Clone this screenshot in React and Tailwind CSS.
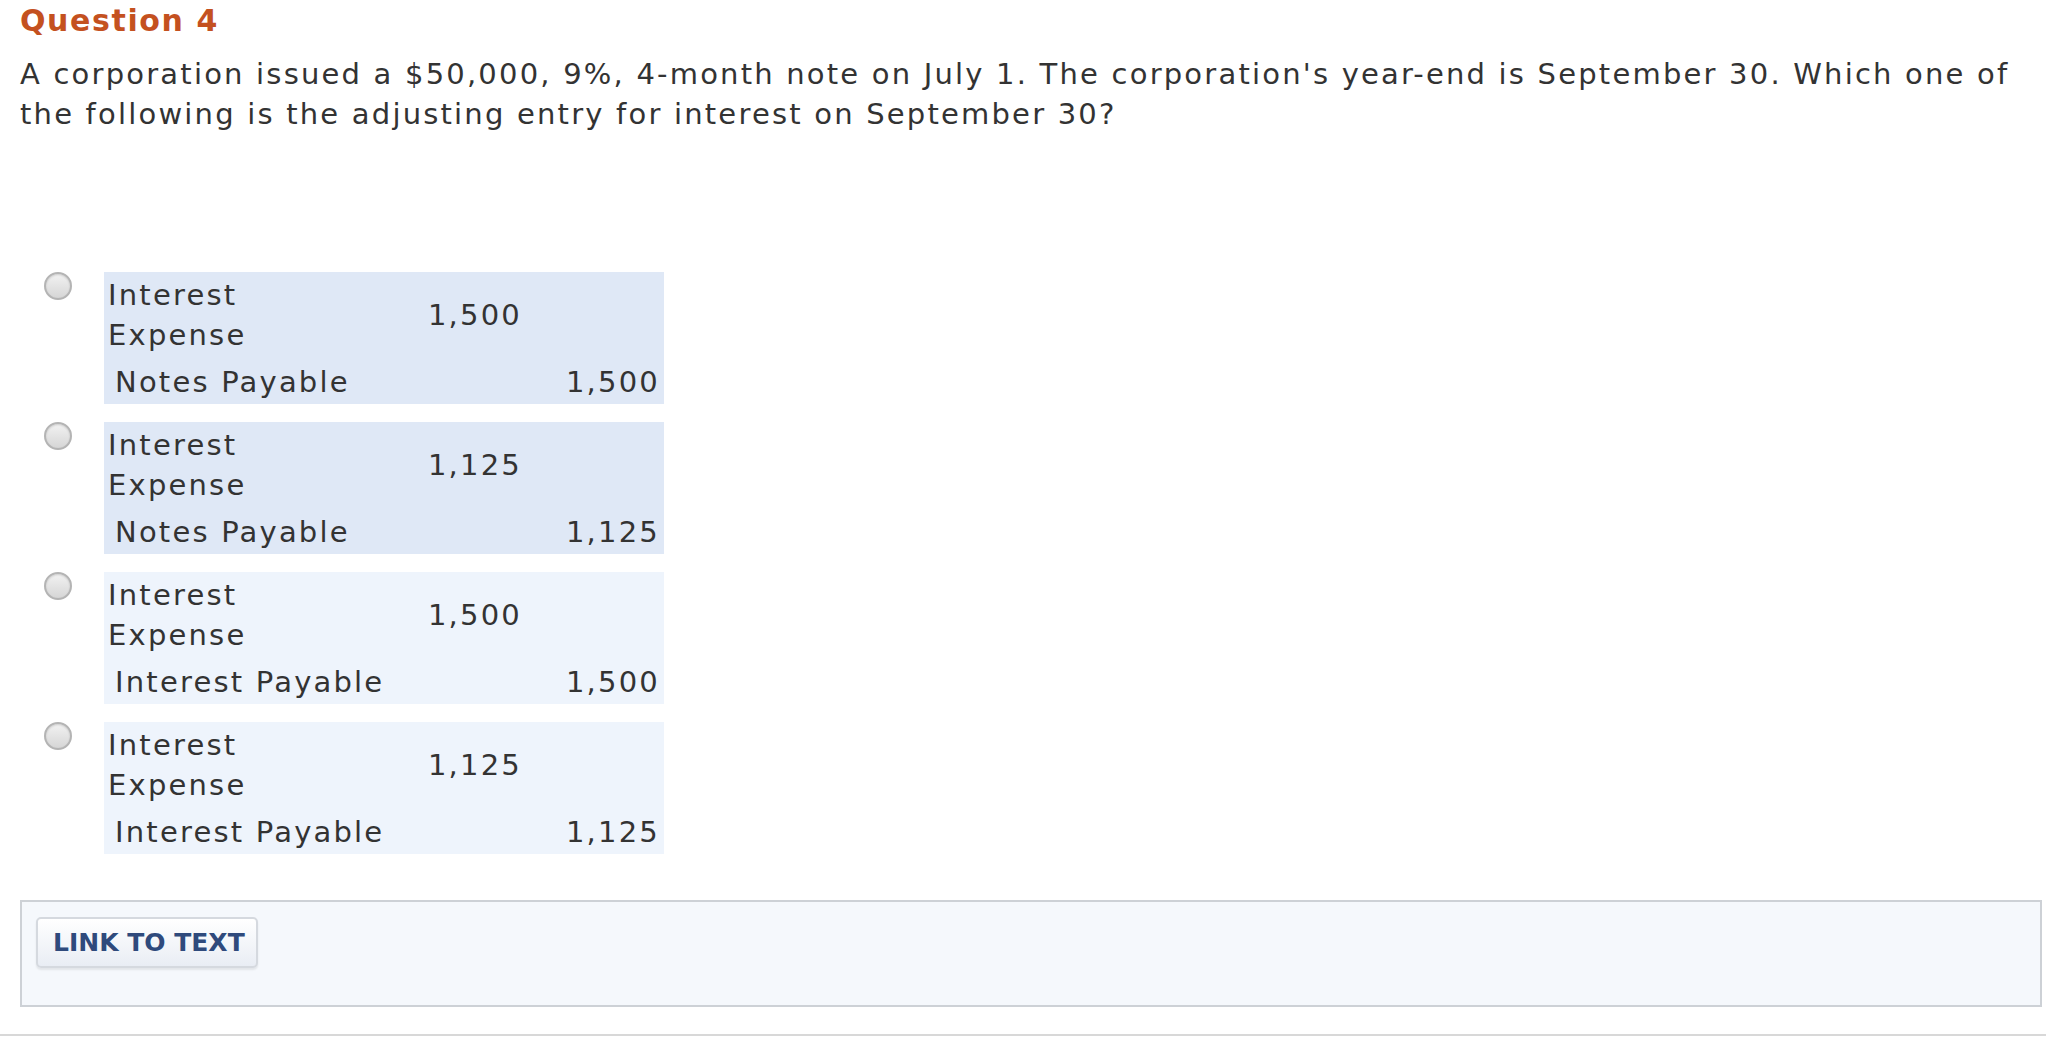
import React from "react";

const options = [
  { debit: "1,500", creditName: "Notes Payable", credit: "1,500", bg: "bg-[#dfe8f6]" },
  { debit: "1,125", creditName: "Notes Payable", credit: "1,125", bg: "bg-[#dfe8f6]" },
  { debit: "1,500", creditName: "Interest Payable", credit: "1,500", bg: "bg-[#eef4fc]" },
  { debit: "1,125", creditName: "Interest Payable", credit: "1,125", bg: "bg-[#eef4fc]" },
];

function Radio() {
  return (
    <div className="w-[28px] h-[28px] shrink-0 rounded-full border-2 border-[#b4b4b4] bg-gradient-to-b from-[#f2f2f2] to-[#d6d6d6] shadow-[inset_0_1px_2px_rgba(0,0,0,0.15)]" />
  );
}

function Option({ o }) {
  return (
    <div className="flex items-start pl-[44px]">
      <Radio />
      <div className={`ml-[32px] w-[560px] h-[132px] ${o.bg} px-[4px] pt-[3px] text-[29px] leading-[40px] tracking-[2.2px] text-[#333]`}>
        <div className="flex items-center">
          <div className="w-[200px]">
            <div>Interest</div>
            <div>Expense</div>
          </div>
          <div className="w-[214px] text-right">{o.debit}</div>
        </div>
        <div className="flex justify-between mt-[7px] pl-[7px] pr-0">
          <span>{o.creditName}</span>
          <span>{o.credit}</span>
        </div>
      </div>
    </div>
  );
}

export default function App() {
  return (
    <div className="w-[2046px] h-[1039px] bg-white font-['DejaVu_Sans',_'Verdana',_sans-serif] overflow-hidden">
      <div className="pt-[1px] pl-[20px] text-[30px] leading-[40px] font-bold tracking-[1.6px] text-[#c4511f]">Question 4</div>
      <div className="mt-[13px] pl-[20px] text-[29px] leading-[40px] tracking-[2.2px] text-[#333] whitespace-nowrap">
        A corporation issued a $50,000, 9%, 4-month note on July 1. The corporation's year-end is September 30. Which one of
        <br />
        the following is the adjusting entry for interest on September 30?
      </div>
      <div className="mt-[138px] flex flex-col gap-[18px]">
        {options.map((o, i) => (
          <Option key={i} o={o} />
        ))}
      </div>
      <div className="mt-[46px] ml-[20px] w-[2022px] h-[107px] border-2 border-[#cdd1d6] bg-[#f5f8fc] pt-[15px] pl-[14px]">
        <button className="w-[222px] h-[51px] rounded-[5px] border-2 border-[#d5d9df] bg-gradient-to-b from-[#ffffff] to-[#e9edf4] shadow-[0_2px_2px_rgba(0,0,0,0.08)] text-left pl-[15px] text-[25px] font-bold text-[#2f4a7c] leading-[30px]">
          LINK TO TEXT
        </button>
      </div>
      <div className="mt-[27px] h-[2px] bg-[#d8d8d8]" />
    </div>
  );
}
